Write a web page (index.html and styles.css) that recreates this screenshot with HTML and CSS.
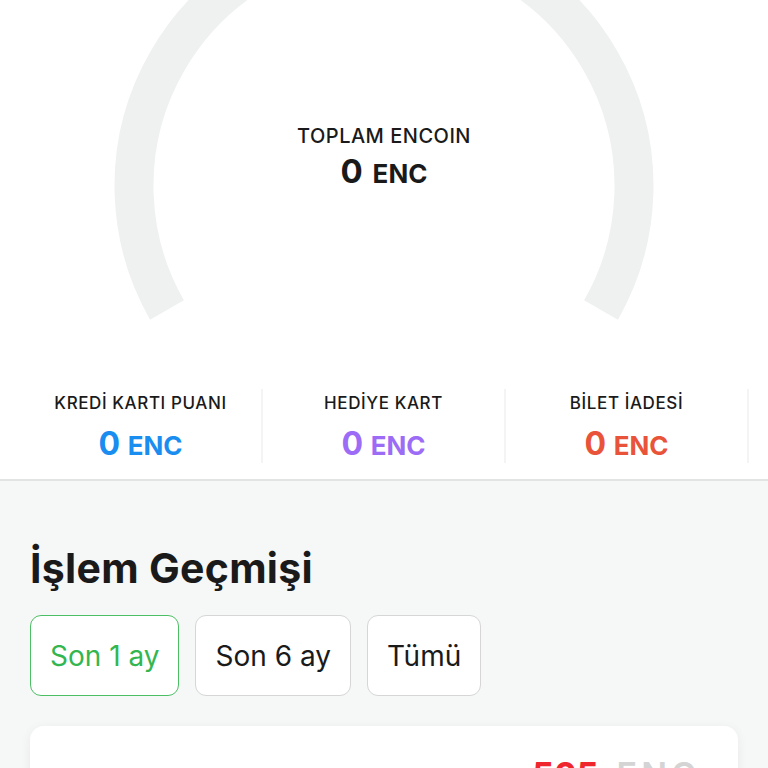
FILE: index.html
```html
<!DOCTYPE html>
<html lang="tr">
<head>
    <meta charset="UTF-8">
    <meta name="viewport" content="width=device-width, initial-scale=1.0">
    <title>Encoin</title>
    <link rel="stylesheet" href="styles.css">
</head>
<body>

    <!-- Gauge -->
    <div class="gauge">
        <svg class="gauge-arc" width="768" height="370" viewBox="0 0 768 370">
            <path d="M 167 310 A 250 250 0 1 1 601 310" fill="none" stroke="#eff1f0" stroke-width="39"/>
        </svg>
        <div class="gauge-text">
            <p class="gauge-label">TOPLAM ENCOIN</p>
            <p class="gauge-value">0 <span class="unit">ENC</span></p>
        </div>
    </div>

    <!-- Balances -->
    <div class="stats">
        <div class="stat">
            <p class="stat-label">KREDİ KARTI PUANI</p>
            <p class="stat-value blue">0 <span class="unit">ENC</span></p>
        </div>
        <div class="stat">
            <p class="stat-label">HEDİYE KART</p>
            <p class="stat-value purple">0 <span class="unit">ENC</span></p>
        </div>
        <div class="stat">
            <p class="stat-label">BİLET İADESİ</p>
            <p class="stat-value red">0 <span class="unit">ENC</span></p>
        </div>
    </div>

    <!-- History -->
    <div class="history">
        <h2>İşlem Geçmişi</h2>
        <div class="filters">
            <button class="filter active">Son 1 ay</button>
            <button class="filter">Son 6 ay</button>
            <button class="filter">Tümü</button>
        </div>
        <div class="tx-card">
            <div class="tx-amount"><span class="minus">-505</span><span class="tx-unit">ENC</span></div>
        </div>
    </div>

</body>
</html>
```

FILE: styles.css
```css
/* Encoin wallet screen */
body {
    font-family: 'Inter', 'Noto Sans', sans-serif;
    margin: 0;
    background-color: #f6f7f7;
    color: #1a1a1a;
    height: 768px;
    overflow: hidden;
}

p {
    margin: 0;
}

.gauge {
    display: grid;
    background-color: #fff;
    height: 370px;
}

.gauge-arc,
.gauge-text {
    grid-area: 1 / 1;
}

.gauge-text {
    text-align: center;
    padding-top: 124px;
}

.gauge-label {
    font-size: 20px;
    font-weight: 500;
    letter-spacing: 0.5px;
}

.gauge-value {
    font-size: 33px;
    font-weight: 700;
    margin-top: 3px;
}

.gauge-value .unit {
    font-size: 26px;
    margin-left: 2px;
}

.stats {
    display: flex;
    background-color: #fff;
    padding: 19px 0 16px 20px;
    border-bottom: 2px solid #e2e3e3;
}

.stat {
    width: 241px;
    text-align: center;
    border-right: 2px solid #f4f4f4;
    padding: 4px 0 0;
}

.stat-label {
    font-size: 17px;
    font-weight: 500;
    letter-spacing: 0.6px;
}

.stat-value {
    font-size: 32px;
    font-weight: 700;
    margin-top: 11px;
}

.stat-value .unit {
    font-size: 26px;
}

.blue { color: #1a8df0; }
.purple { color: #9c6cf6; }
.red { color: #e8533a; }

.history {
    padding: 0 30px;
}

h2 {
    font-size: 41px;
    font-weight: 700;
    margin: 62px 0 22px;
    letter-spacing: 0.3px;
}

.filters {
    display: flex;
    gap: 16px;
}

.filter {
    font-family: inherit;
    font-size: 28px;
    color: #1a1a1a;
    background-color: #fff;
    border: 1px solid #d6d6d6;
    border-radius: 11px;
    height: 81px;
    padding: 0 19px;
}

.filter.active {
    color: #33b64f;
    border-color: #4cbf64;
}

.tx-card {
    background-color: #fff;
    border-radius: 14px;
    margin-top: 30px;
    height: 120px;
    box-shadow: 0 2px 12px rgba(0, 0, 0, 0.06);
    display: flex;
    justify-content: flex-end;
    padding: 28px 38px 0 0;
}

.tx-amount {
    font-size: 34px;
    font-weight: 700;
}

.minus {
    color: #f0262e;
}

.tx-unit {
    color: #d4d4d4;
    font-weight: 600;
    margin-left: 18px;
    letter-spacing: 4px;
}
```
